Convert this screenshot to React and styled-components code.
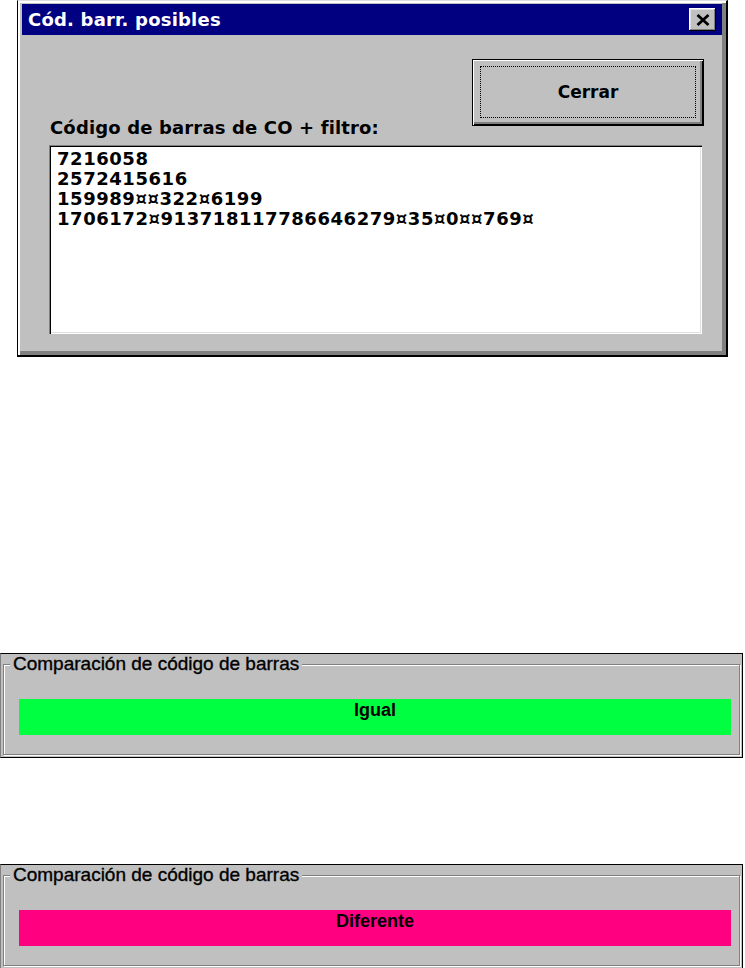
import React from "react";
import styled, { createGlobalStyle } from "styled-components";

const GlobalStyle = createGlobalStyle`
  html, body { margin: 0; padding: 0; background: #fff; }
  body { font-family: "DejaVu Sans", "Liberation Sans", sans-serif; }
  * { box-sizing: border-box; }
`;

const Page = styled.div`
  display: flex;
  flex-direction: column;
  width: 745px;
`;

const Window = styled.div`
  margin-left: 17px;
  width: 711px;
  height: 357px;
  background: #c0c0c0;
  border-style: solid;
  border-width: 1px 2px 2px 1px;
  border-color: #dfdfdf #000 #000 #000;
  box-shadow: inset 2px 2px 0 #fff, inset -4px -4px 0 #808080;
  padding: 3px 4px 0 4px;
  display: flex;
  flex-direction: column;
`;

const TitleBar = styled.div`
  height: 31px;
  background: #000080;
  display: flex;
  align-items: center;
  justify-content: space-between;
  padding: 0 6px;
`;

const TitleText = styled.span`
  color: #fff;
  font: 700 18px/20px "DejaVu Sans", sans-serif;
  letter-spacing: 0.2px;
  white-space: nowrap;
`;

const CloseButton = styled.button`
  width: 27px;
  height: 23px;
  padding: 0;
  border: none;
  background: #c0c0c0;
  box-shadow: inset -1px -1px 0 #000, inset 1px 1px 0 #fff,
    inset -2px -2px 0 #808080, inset 2px 2px 0 #dfdfdf;
  display: flex;
  align-items: center;
  justify-content: center;
`;

const Body = styled.div`
  flex: 1;
  display: grid;
  grid-template-columns: 1fr 232px;
  grid-template-rows: 59px 20px auto;
  padding: 24px 18px 0 27px;
`;

const DefaultButton = styled.button`
  grid-column: 2;
  grid-row: 1 / 3;
  align-self: start;
  width: 232px;
  height: 67px;
  border: 1px solid #000;
  background: #c0c0c0;
  box-shadow: inset 1px 1px 0 #fff, inset -1px -1px 0 #000,
    inset -3px -3px 0 #808080;
  padding: 6px 7px 7px 7px;
  display: flex;
  cursor: default;
`;

const FocusRing = styled.span`
  flex: 1;
  border: 1px dotted #000;
  display: flex;
  align-items: center;
  justify-content: center;
  font: 700 17px/20px "DejaVu Sans", sans-serif;
  color: #000;
`;

const FieldLabel = styled.div`
  grid-column: 1;
  grid-row: 2;
  font: 700 18px/20px "DejaVu Sans", sans-serif;
  letter-spacing: 0.15px;
  color: #000;
  padding-left: 1px;
  white-space: nowrap;
`;

const ListBox = styled.div`
  grid-column: 1 / -1;
  grid-row: 3;
  margin-top: 7px;
  width: 653px;
  height: 189px;
  background: #fff;
  box-shadow: inset 1px 1px 0 #808080, inset 2px 2px 0 #000,
    inset -1px -1px 0 #fff, inset -2px -2px 0 #dfdfdf;
  padding: 4px 4px 0 8px;
  overflow: hidden;
`;

const ListLine = styled.div`
  font: 700 18px/20px "DejaVu Sans", sans-serif;
  letter-spacing: 0.55px;
  color: #000;
  white-space: nowrap;
`;

const Panel = styled.div`
  width: 743px;
  margin-top: ${(p) => p.$gap}px;
  border: 1px solid #000;
  border-left-color: #808080;
  background: #c0c0c0;
  padding: 0 2px 2px 2px;
`;

const Group = styled.fieldset`
  margin: 0;
  padding: 0 0 19px 0;
  min-width: 0;
  border: 1px solid #808080;
  box-shadow: inset 1px 1px 0 #fff, 1px 1px 0 #fff;
`;

const GroupLegend = styled.legend`
  margin-left: 6px;
  padding: 0 3px;
  background: #c0c0c0;
  font: 400 19px/20px "Liberation Sans", Arial, sans-serif;
  -webkit-text-stroke: 0.35px #000;
  color: #000;
`;

const ResultBar = styled.div`
  margin: 25px 8px 0 15px;
  height: 36px;
  background: ${(p) => p.$color};
  display: flex;
  justify-content: center;
  align-items: flex-start;
  padding-top: 1px;
  font: 700 18px/20px "Liberation Sans", Arial, sans-serif;
  color: #000;
`;

const lines = [
  "7216058",
  "2572415616",
  "159989\u00a4\u00a4322\u00a46199",
  "1706172\u00a4913718117786646279\u00a435\u00a40\u00a4\u00a4769\u00a4",
];

const CloseIcon = () => (
  <svg width="14" height="12" viewBox="0 0 14 12">
    <path d="M1.5 1 L12.5 11 M12.5 1 L1.5 11" stroke="#000" strokeWidth="2.8" fill="none" />
  </svg>
);

const Comparison = ({ gap, color, result }) => (
  <Panel $gap={gap}>
    <Group>
      <GroupLegend>Comparación de código de barras</GroupLegend>
      <ResultBar $color={color}>{result}</ResultBar>
    </Group>
  </Panel>
);

export default function App() {
  return (
    <>
      <GlobalStyle />
      <Page>
        <Window>
          <TitleBar>
            <TitleText>Cód. barr. posibles</TitleText>
            <CloseButton aria-label="Cerrar">
              <CloseIcon />
            </CloseButton>
          </TitleBar>
          <Body>
            <DefaultButton>
              <FocusRing>Cerrar</FocusRing>
            </DefaultButton>
            <FieldLabel>Código de barras de CO + filtro:</FieldLabel>
            <ListBox>
              {lines.map((l, i) => (
                <ListLine key={i}>{l}</ListLine>
              ))}
            </ListBox>
          </Body>
        </Window>
        <Comparison gap={296} color="#00ff40" result="Igual" />
        <Comparison gap={106} color="#ff0080" result="Diferente" />
      </Page>
    </>
  );
}
